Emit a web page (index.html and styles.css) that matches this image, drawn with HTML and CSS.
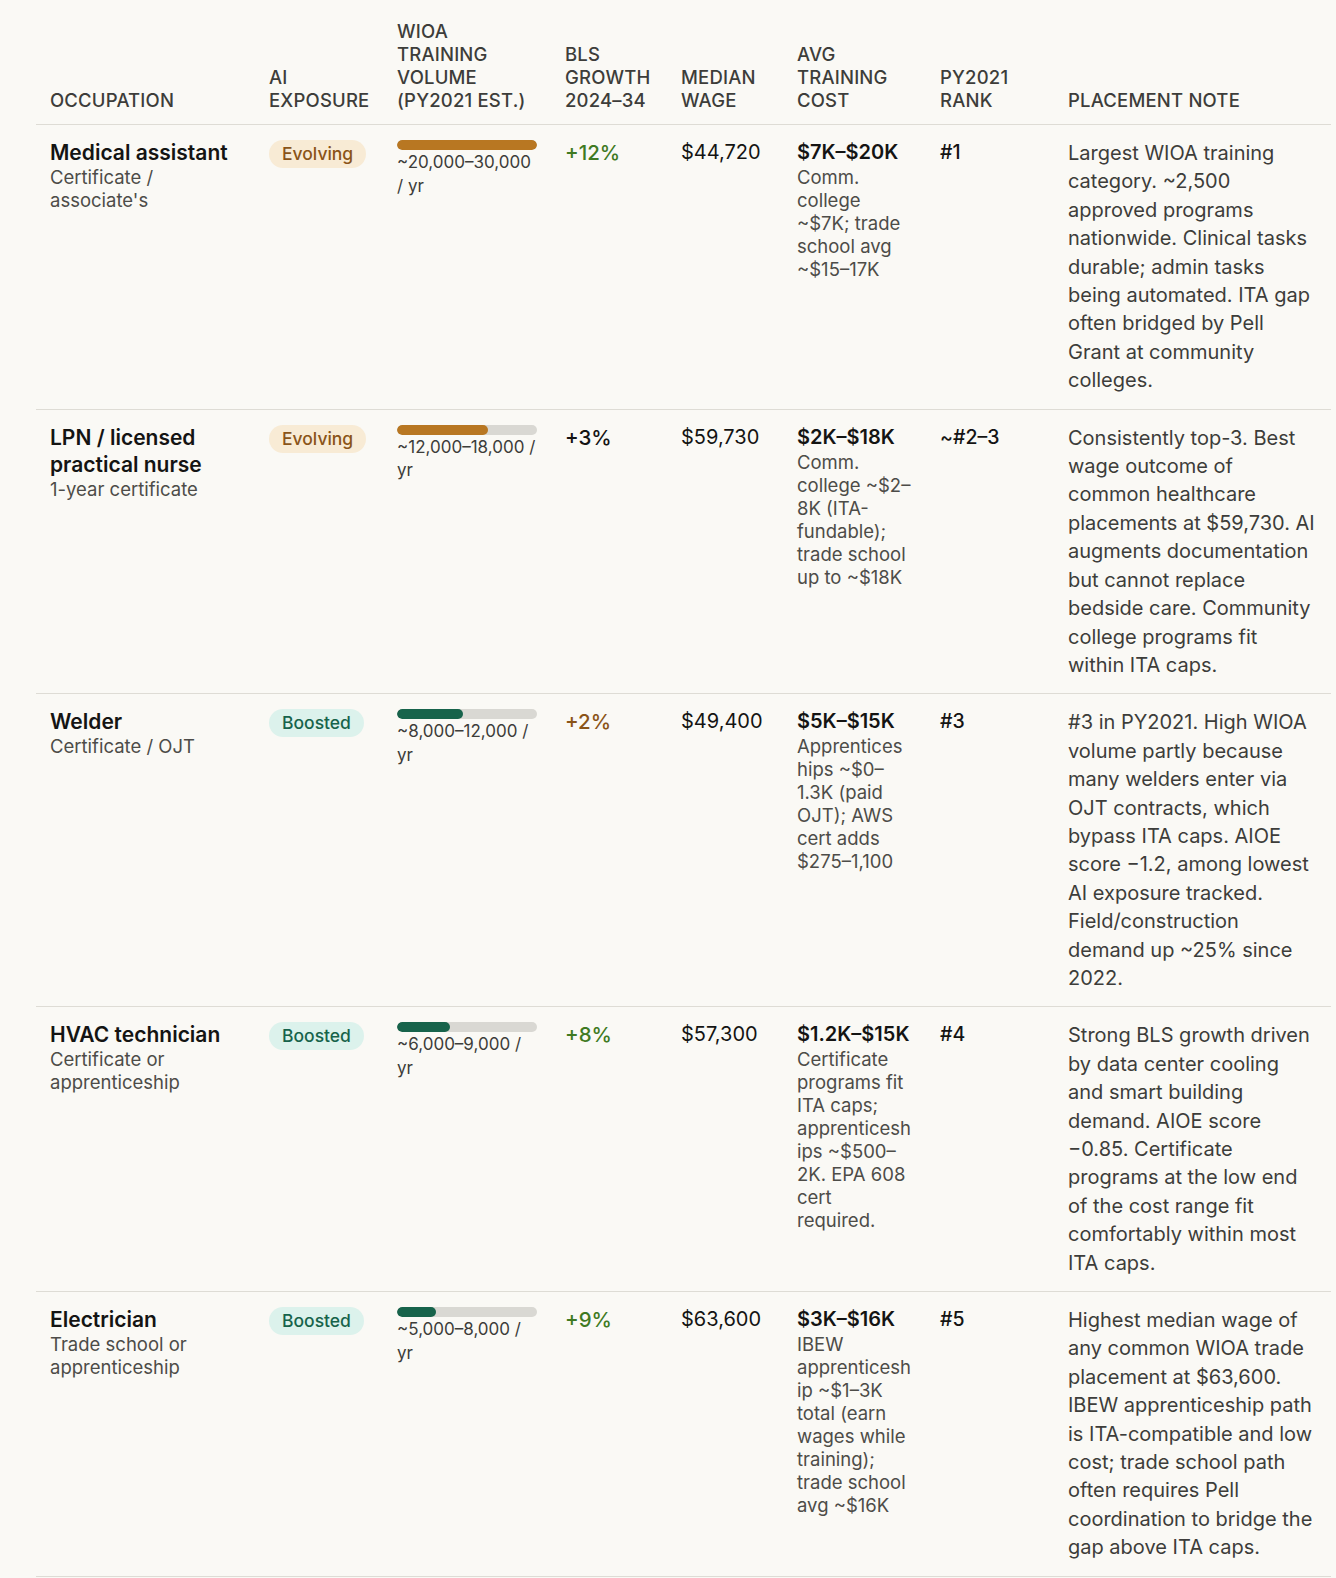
FILE: index.html
```html
<!DOCTYPE html>
<html lang="en">
<head>
<meta charset="utf-8">
<title>WIOA training occupations</title>
<link rel="stylesheet" href="styles.css">
</head>
<body>
<table class="occ-table">
  <colgroup>
    <col class="c-occ"><col class="c-ai"><col class="c-vol"><col class="c-bls"><col class="c-wage"><col class="c-cost"><col class="c-rank"><col class="c-note">
  </colgroup>
  <thead>
    <tr>
      <th>Occupation</th>
      <th>AI exposure</th>
      <th>WIOA training volume (PY2021 est.)</th>
      <th>BLS growth 2024–34</th>
      <th>Median wage</th>
      <th>Avg training cost</th>
      <th>PY2021 rank</th>
      <th>Placement note</th>
    </tr>
  </thead>
  <tbody>
    <tr>
      <td><div class="occ-name">Medical assistant</div><div class="sub">Certificate / associate's</div></td>
      <td><span class="badge badge-evolving">Evolving</span></td>
      <td><div class="bar"><div class="fill fill-amber" style="width:100%"></div></div><div class="vol">~20,000–30,000 / yr</div></td>
      <td><span class="growth up">+12%</span></td>
      <td class="wage">$44,720</td>
      <td><div class="cost">$7K–$20K</div><div class="sub">Comm. college ~$7K; trade school avg ~$15–17K</div></td>
      <td class="rank">#1</td>
      <td class="note">Largest WIOA training category. ~2,500 approved programs nationwide. Clinical tasks durable; admin tasks being automated. ITA gap often bridged by Pell Grant at community colleges.</td>
    </tr>
    <tr>
      <td><div class="occ-name">LPN / licensed practical nurse</div><div class="sub">1-year certificate</div></td>
      <td><span class="badge badge-evolving">Evolving</span></td>
      <td><div class="bar"><div class="fill fill-amber" style="width:65%"></div></div><div class="vol">~12,000–18,000 / yr</div></td>
      <td><span class="growth flat">+3%</span></td>
      <td class="wage">$59,730</td>
      <td><div class="cost">$2K–$18K</div><div class="sub">Comm. college ~$2–8K (ITA-fundable); trade school up to ~$18K</div></td>
      <td class="rank">~#2–3</td>
      <td class="note">Consistently top-3. Best wage outcome of common healthcare placements at $59,730. AI augments documentation but cannot replace bedside care. Community college programs fit within ITA caps.</td>
    </tr>
    <tr>
      <td><div class="occ-name">Welder</div><div class="sub">Certificate / OJT</div></td>
      <td><span class="badge badge-boosted">Boosted</span></td>
      <td><div class="bar"><div class="fill fill-green" style="width:47%"></div></div><div class="vol">~8,000–12,000 / yr</div></td>
      <td><span class="growth low">+2%</span></td>
      <td class="wage">$49,400</td>
      <td><div class="cost">$5K–$15K</div><div class="sub">Apprenticeships ~$0–1.3K (paid OJT); AWS cert adds $275–1,100</div></td>
      <td class="rank">#3</td>
      <td class="note">#3 in PY2021. High WIOA volume partly because many welders enter via OJT contracts, which bypass ITA caps. AIOE score −1.2, among lowest AI exposure tracked. Field/construction demand up ~25% since 2022.</td>
    </tr>
    <tr>
      <td><div class="occ-name">HVAC technician</div><div class="sub">Certificate or apprenticeship</div></td>
      <td><span class="badge badge-boosted">Boosted</span></td>
      <td><div class="bar"><div class="fill fill-green" style="width:38%"></div></div><div class="vol">~6,000–9,000 / yr</div></td>
      <td><span class="growth up">+8%</span></td>
      <td class="wage">$57,300</td>
      <td><div class="cost">$1.2K–$15K</div><div class="sub">Certificate programs fit ITA caps; apprenticeships ~$500–2K. EPA 608 cert required.</div></td>
      <td class="rank">#4</td>
      <td class="note">Strong BLS growth driven by data center cooling and smart building demand. AIOE score −0.85. Certificate programs at the low end of the cost range fit comfortably within most ITA caps.</td>
    </tr>
    <tr>
      <td><div class="occ-name">Electrician</div><div class="sub">Trade school or apprenticeship</div></td>
      <td><span class="badge badge-boosted">Boosted</span></td>
      <td><div class="bar"><div class="fill fill-green" style="width:28%"></div></div><div class="vol">~5,000–8,000 / yr</div></td>
      <td><span class="growth up">+9%</span></td>
      <td class="wage">$63,600</td>
      <td><div class="cost">$3K–$16K</div><div class="sub">IBEW apprenticeship ~$1–3K total (earn wages while training); trade school avg ~$16K</div></td>
      <td class="rank">#5</td>
      <td class="note">Highest median wage of any common WIOA trade placement at $63,600. IBEW apprenticeship path is ITA-compatible and low cost; trade school path often requires Pell coordination to bridge the gap above ITA caps.</td>
    </tr>
  </tbody>
</table>
</body>
</html>
```

FILE: styles.css
```css
html, body {
  background: #faf9f5;
}
body {
  margin: 0;
  padding: 20px 0 0 36px;
  font-family: Inter, "Liberation Sans", sans-serif;
  color: #141413;
}
.occ-table {
  width: 1295px;
  border-collapse: collapse;
  table-layout: fixed;
}
.c-occ { width: 219px; }
.c-ai { width: 128px; }
.c-vol { width: 168px; }
.c-bls { width: 116px; }
.c-wage { width: 116px; }
.c-cost { width: 143px; }
.c-rank { width: 128px; }
.c-note { width: auto; }

.occ-table th {
  text-align: left;
  vertical-align: bottom;
  font-weight: 500;
  font-size: 18.5px;
  line-height: 23px;
  text-transform: uppercase;
  letter-spacing: 0.01em;
  color: #3d3d3a;
  padding: 0 14px 12px 14px;
  border-bottom: 1px solid #dedcd5;
}
.occ-table td {
  vertical-align: top;
  padding: 14px;
  border-bottom: 1px solid #dedcd5;
  font-size: 20px;
  line-height: 28.4px;
  overflow-wrap: anywhere;
}
.occ-name {
  font-size: 21px;
  line-height: 27px;
  font-weight: 600;
  color: #141413;
}
.sub {
  font-size: 18.5px;
  line-height: 23px;
  color: #4d4c48;
}
.badge {
  display: inline-block;
  font-size: 17.5px;
  line-height: 28px;
  font-weight: 500;
  padding: 0 13px;
  border-radius: 14px;
}
.badge-evolving {
  background: #f8ebd5;
  color: #8a5418;
}
.badge-boosted {
  background: #dcf2ec;
  color: #17634b;
}
.bar {
  width: 140px;
  height: 10px;
  border-radius: 5px;
  background: #d9d8d3;
  margin-top: 1px;
  overflow: hidden;
}
.fill {
  height: 100%;
  border-radius: 5px;
}
.fill-amber { background: #b87722; }
.fill-green { background: #17634b; }
.vol {
  font-size: 17px;
  line-height: 23.5px;
  color: #3d3d3a;
  margin-top: 1px;
}
.growth {
  font-size: 20.5px;
  line-height: 27px;
  font-weight: 500;
}
.growth.up { color: #3f7a22; }
.growth.flat { color: #141413; }
.growth.low { color: #8a5418; }
.occ-table td.wage {
  font-size: 20px;
  line-height: 27px;
}
.cost {
  font-size: 20px;
  line-height: 27px;
  font-weight: 600;
}
.occ-table td.rank {
  font-size: 19.5px;
  line-height: 27px;
  font-weight: 500;
}
.note {
  color: #3d3d3a;
}
```
